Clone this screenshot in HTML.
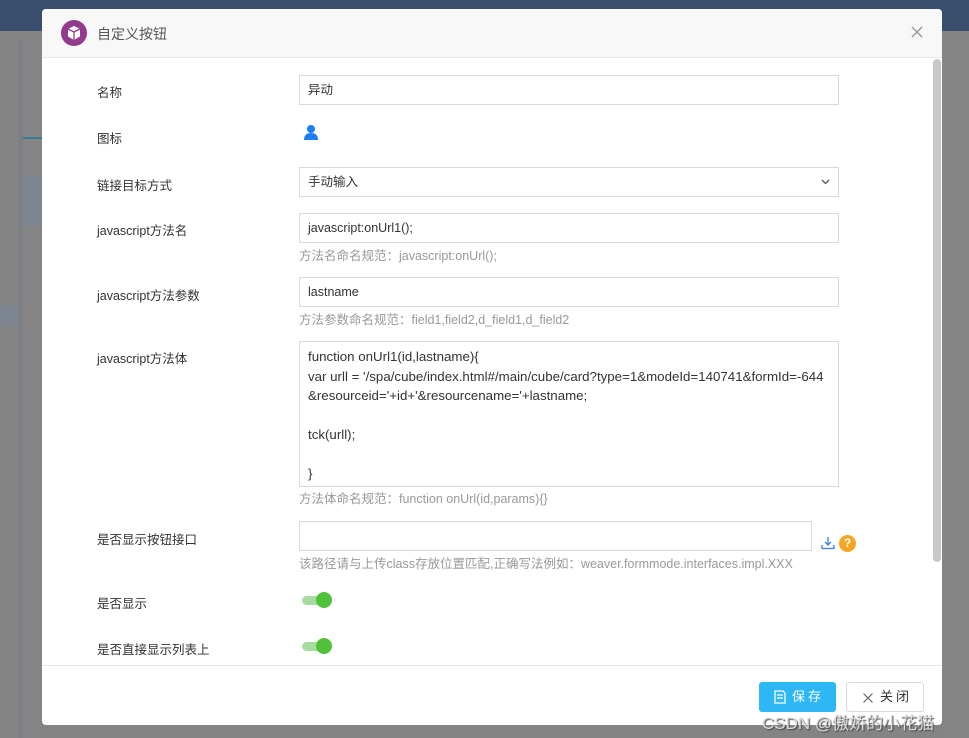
<!DOCTYPE html>
<html><head><meta charset="utf-8"><style>
*{box-sizing:border-box;margin:0;padding:0}
body{width:969px;height:738px;overflow:hidden;background:#848484;position:relative;font-family:"Liberation Sans","Noto Sans CJK SC",sans-serif;font-size:12px;color:#333}
.a{position:absolute}
.lbl{position:absolute;left:97px;font-size:12.5px;color:#333}
.inp{position:absolute;left:299px;width:540px;height:30px;border:1px solid #d9d9d9;background:#fff;padding:0 8px;line-height:28px;font-size:12.5px;color:#333}
.hint{position:absolute;left:299px;font-size:12.5px;color:#999}
.sw{position:absolute;left:302px;width:30px;height:16px}
.sw .t{position:absolute;left:0;top:4px;width:28px;height:9px;border-radius:5px;background:#a6dca0}
.sw .k{position:absolute;left:14px;top:0;width:16px;height:16px;border-radius:50%;background:#52c13a}
</style></head><body>
<div class="a" style="left:0;top:0;width:969px;height:31px;background:#394d6d"></div>
<div class="a" style="left:18px;top:40px;width:5px;height:698px;background:#7e7f84"></div>
<div class="a" style="left:23px;top:40px;width:19px;height:698px;background:#858585"></div>
<div class="a" style="left:23px;top:176px;width:19px;height:50px;background:#7d8590"></div>
<div class="a" style="left:0;top:305px;width:18px;height:22px;background:#7d8590"></div>
<div class="a" style="left:23px;top:137px;width:19px;height:2px;background:#3a7a95"></div>
<div class="a" style="left:942px;top:40px;width:27px;height:698px;background:#858585"></div>
<div class="a" style="left:42px;top:9px;width:900px;height:716px;background:#fff;border-radius:4px;overflow:hidden">
 <div class="a" style="left:0;top:0;width:900px;height:49px;background:#f8f8f8;border-bottom:1px solid #e8e8e8"></div>
 <svg class="a" style="left:19px;top:11px" width="26" height="26" viewBox="0 0 26 26"><circle cx="13" cy="13" r="13" fill="#943a8c"/><path d="M13 6 L19 9 L19 16.5 L13 20 L7 16.5 L7 9 Z" fill="#fff"/><path d="M7 9 L13 12 L19 9 M13 12 L13 20" stroke="#943a8c" stroke-width="1.3" fill="none"/></svg>
 <div class="a" style="left:55px;top:15px;font-size:14px;color:#555">自定义按钮</div>
 <svg class="a" style="left:869px;top:17px" width="12" height="12" viewBox="0 0 12 12"><path d="M1 1L11 11M11 1L1 11" stroke="#999" stroke-width="1.5"/></svg>
 <div class="a" style="left:891px;top:50px;width:8px;height:503px;background:#c8c8c8;border-radius:4px"></div>
 <div class="a" style="left:0;top:656px;width:900px;height:1px;background:#e8e8e8"></div>
 <div class="a" style="left:717px;top:673px;width:77px;height:30px;background:#2db7f5;border-radius:3px;color:#fff;font-size:13px;line-height:30px;letter-spacing:3px">
  <svg class="a" style="left:15px;top:8px" width="12" height="14" viewBox="0 0 12 14"><path d="M1 1H9L11 3V13H1Z M3 5H9 M3 8H9" stroke="#fff" stroke-width="1.3" fill="none"/></svg>
  <span class="a" style="left:33px;top:0">保存</span></div>
 <div class="a" style="left:804px;top:673px;width:78px;height:30px;border:1px solid #d9d9d9;border-radius:3px;color:#333;font-size:13px;line-height:28px;letter-spacing:3px">
  <svg class="a" style="left:16px;top:10px" width="10" height="10" viewBox="0 0 10 10"><path d="M0.5 0.5L9.5 9.5M9.5 0.5L0.5 9.5" stroke="#555" stroke-width="1"/></svg>
  <span class="a" style="left:33px;top:0">关闭</span></div>
</div>
<div class="lbl" style="top:82px">名称</div>
<div class="inp" style="top:75px">异动</div>
<div class="lbl" style="top:128px">图标</div>
<svg class="a" style="left:303px;top:124px" width="16" height="16" viewBox="0 0 16 16"><circle cx="8" cy="5" r="4" fill="#1a7ff5"/><path d="M1 16 Q1 9 8 9 Q15 9 15 16Z" fill="#1a7ff5"/></svg>
<div class="lbl" style="top:175px">链接目标方式</div>
<div class="inp" style="top:167px">手动输入<svg style="position:absolute;right:8px;top:11px" width="9" height="6" viewBox="0 0 9 6"><path d="M1 1L4.5 4.5L8 1" stroke="#555" stroke-width="1.3" fill="none"/></svg></div>
<div class="lbl" style="top:220px">javascript方法名</div>
<div class="inp" style="top:213px">javascript:onUrl1();</div>
<div class="hint" style="top:245px">方法名命名规范：javascript:onUrl();</div>
<div class="lbl" style="top:285px">javascript方法参数</div>
<div class="inp" style="top:277px">lastname</div>
<div class="hint" style="top:309px">方法参数命名规范：field1,field2,d_field1,d_field2</div>
<div class="lbl" style="top:348px">javascript方法体</div>
<div class="a" style="left:299px;top:341px;width:540px;height:146px;border:1px solid #d9d9d9;padding:5px 8px;line-height:19.5px;font-size:13.3px;white-space:pre;overflow:hidden">function onUrl1(id,lastname){
var urll = '/spa/cube/index.html#/main/cube/card?type=1&amp;modeId=140741&amp;formId=-644
&amp;resourceid='+id+'&amp;resourcename='+lastname;

tck(urll);

}</div>
<div class="hint" style="top:488px">方法体命名规范：function onUrl(id,params){}</div>
<div class="lbl" style="top:529px">是否显示按钮接口</div>
<div class="inp" style="top:521px;width:513px"></div>
<svg class="a" style="left:821px;top:536px" width="14" height="14" viewBox="0 0 14 14"><path d="M7 1V9M4 6L7 9L10 6M1 9V12.5H13V9" stroke="#3f7ee8" stroke-width="1.3" fill="none"/></svg>
<div class="a" style="left:839px;top:535px;width:17px;height:17px;border-radius:50%;background:#f5a623;color:#fff;font-weight:bold;font-size:12px;text-align:center;line-height:17px">?</div>
<div class="hint" style="top:553px">该路径请与上传class存放位置匹配,正确写法例如：weaver.formmode.interfaces.impl.XXX</div>
<div class="lbl" style="top:593px">是否显示</div>
<div class="sw" style="top:592px"><div class="t"></div><div class="k"></div></div>
<div class="lbl" style="top:639px">是否直接显示列表上</div>
<div class="sw" style="top:638px"><div class="t"></div><div class="k"></div></div>
<div class="a" style="left:762px;top:709px;font-size:17px;color:#ddd;text-shadow:1px 1px 1px #444">CSDN @傲娇的小花猫</div>
</body></html>
